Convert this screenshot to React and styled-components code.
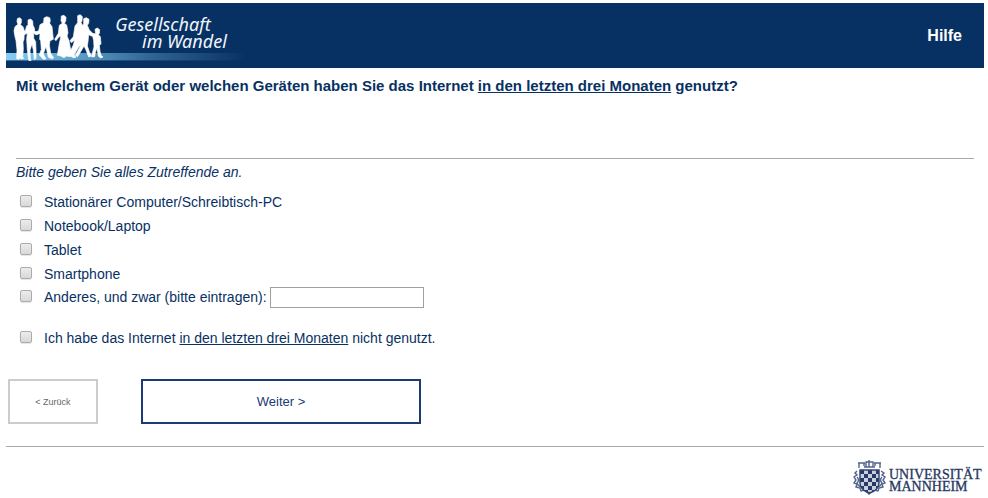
import React from "react";
import styled, { createGlobalStyle } from "styled-components";

const navy = "#083163";

const GlobalStyle = createGlobalStyle`
  * { box-sizing: border-box; }
  body {
    margin: 3px 4px 0 6px;
    background: #fff;
    color: ${navy};
    font: 14px/16px "Liberation Sans", Arial, sans-serif;
  }
`;

const Header = styled.header`
  display: flex;
  align-items: center;
  justify-content: space-between;
  height: 65px;
  padding-right: 22px;
  background: ${navy};
`;

const BrandLogo = styled.svg`
  display: block;
  width: 240px;
  height: 65px;
`;

const HelpLink = styled.a`
  color: #fff;
  font-size: 16px;
  font-weight: bold;
  text-decoration: none;
`;

const Survey = styled.main`
  padding: 10px 10px 0;
`;

const Question = styled.h1`
  min-height: 80px;
  margin: 0;
  font-size: 15px;
  line-height: 16px;
`;

const Options = styled.fieldset`
  margin: 0;
  padding: 0;
  border: 0;
  border-top: 1px solid #aaa;
`;

const Hint = styled.p`
  margin: 5px 0 10px;
  font-style: italic;
  line-height: 16px;
`;

const Option = styled.div`
  display: flex;
  align-items: center;
  height: ${(p) => (p.$withInput ? "22px" : "24px")};
  margin-top: ${(p) => (p.$separate ? "18px" : "0")};
`;

const Checkbox = styled.input`
  appearance: none;
  width: 12px;
  height: 12px;
  margin: 0 12px 2px 4px;
  border: 1px solid #acacac;
  border-radius: 2px;
  background: linear-gradient(#ececec, #d9d9d9);
  box-shadow: 0 1px 1px #e4e4e4;

  &:checked {
    background: ${navy};
    box-shadow: inset 0 0 0 2px #e6e6e6;
  }
`;

const OtherText = styled.input`
  width: 154px;
  height: 21px;
  margin-left: 3px;
  padding: 1px 4px;
  border: 1px solid #a0a0a0;
  color: inherit;
  font: inherit;
`;

const Navigation = styled.nav`
  display: flex;
  gap: 43px;
  margin: 29px 0 22px 2px;
`;

const NavButton = styled.button`
  width: ${(p) => (p.$primary ? "280px" : "90px")};
  height: 45px;
  padding: 0;
  border: 2px solid ${(p) => (p.$primary ? "#1b3a78" : "#ccc")};
  background: #fff;
  color: ${(p) => (p.$primary ? "#1b3a78" : "#666")};
  font-family: inherit;
  font-size: ${(p) => (p.$primary ? "13px" : "9px")};
  cursor: pointer;
`;

const Footer = styled.footer`
  display: flex;
  justify-content: flex-end;
  border-top: 1px solid #aaa;
  padding-top: 12px;
`;

const UniversityLogo = styled.svg`
  display: block;
  width: 132px;
  height: 38px;
`;

function SocietyLogo() {
  return (
    <BrandLogo viewBox="18 9 720 195" role="img" aria-label="Gesellschaft im Wandel">
      <defs>
        <linearGradient id="band" x1="0" x2="1" y1="0" y2="0">
          <stop offset="0" stopColor="#87cdf0" />
          <stop offset="0.3" stopColor="#5c9fc8" />
          <stop offset="0.6" stopColor="#306594" />
          <stop offset="1" stopColor={navy} />
        </linearGradient>
      </defs>
      <rect x="18" y="159" width="720" height="21" fill="url(#band)" />
      <rect x="18" y="180" width="720" height="3" fill="url(#band)" opacity="0.4" />
      <g fill="#fff" stroke="#fff" strokeWidth="2" strokeLinejoin="round">
        <path d="M52 56L58 53L64 57L64 68L61 74L69 80L73 92L72 118L69 126L70 148L68 170L71 175L64 177L59 173L57 178L50 176L51 150L48 122L44 106L42 92L45 80L54 73L51 65Z" />
        <path d="M84 60L92 57L98 63L99 76L103 84L104 94L112 96L118 93L119 99L108 104L101 100L101 115L107 125L108 150L108 175L103 179L100 150L96 132L90 150L91 175L93 182L86 181L82 150L80 118L82 100L72 104L66 98L76 92L80 78L84 74Z" />
        <path d="M132 54L140 50L149 53L151 61L149 70L156 80L160 118L150 122L148 135L152 160L161 173L157 177L145 172L138 140L134 150L130 162L138 177L130 178L118 165L124 148L122 122L119 118L120 100L110 104L106 97L116 92L120 74L131 68Z" />
        <path d="M184 48L192 46L198 52L197 64L193 70L200 75L204 98L201 108L207 122L213 155L210 170L200 168L192 173L182 168L172 166L178 130L183 108L176 112L168 122L164 118L175 100L178 76L187 70L183 62Z" />
        <path d="M233 47L241 44L247 50L246 62L243 68L250 80L252 110L246 130L236 142L228 155L222 164L228 172L220 173L206 166L208 160L220 135L224 120L214 128L210 122L220 110L225 78L233 68Z" />
        <path d="M251 56L259 53L267 58L266 70L262 76L268 90L278 100L290 103L288 109L274 108L266 104L264 125L262 138L268 155L274 168L266 171L258 150L252 138L242 155L233 170L226 166L240 140L245 120L244 80L251 72Z" />
        <path d="M285 88L292 84L299 89L298 101L295 104L301 110L303 132L298 136L300 154L303 166L309 171L301 174L295 168L291 144L286 158L284 170L275 171L276 164L282 140L281 122L278 108L287 102Z" />
      </g>
      <g fill="#f0f5fb" fontFamily='"Noto Sans", "Open Sans", sans-serif' fontStyle="italic" fontSize="54">
        <text x="346" y="92">Gesellschaft</text>
        <text x="426" y="143">im Wandel</text>
      </g>
    </BrandLogo>
  );
}

function MannheimLogo() {
  return (
    <UniversityLogo viewBox="0 0 132 38" role="img" aria-label="Universität Mannheim">
      <defs>
        <clipPath id="shield">
          <path d="M8 11h19v13q0 7-9.500 10Q8 31 8 24z" />
        </clipPath>
      </defs>
      <g fill="none" stroke="#53638e" strokeWidth="1.400">
        <path d="M7 9V4h5v3M28 9V4h-5v3M6 4h7M22 4h7M12 8h11M14 8V3h7v5M17 1v7" />
        <path d="M5 12l-2 2 2 2-3 2 2 3-2 3 3 1-1 3 4 1 1 3 4-1 4 4 5-4 4 1 1-3 4-1-1-3 3-1-2-3 2-3-3-2 2-2-3-2" />
        <path d="M5 18q3 3 0 6q1 3 4 4M30 18q-3 3 0 6q-1 3-4 4" />
      </g>
      <g clipPath="url(#shield)">
        <rect x="8" y="11" width="19" height="24" fill="#273766" />
        <path fill="#c9cfdd" d="M12 11h4v4h-4zM20 11h4v4h-4zM8 15h4v4H8zM16 15h4v4h-4zM24 15h4v4h-4zM12 19h4v4h-4zM20 19h4v4h-4zM8 23h4v4H8zM16 23h4v4h-4zM24 23h4v4h-4zM12 27h4v4h-4zM20 27h4v4h-4zM16 31h4v4h-4z" />
      </g>
      <path d="M8 11h19v13q0 7-9.500 10Q8 31 8 24z" fill="none" stroke="#34446f" strokeWidth="1.500" />
      <g fill="#27375f" stroke="#27375f" strokeWidth="0.300" fontFamily='"Liberation Serif", "Times New Roman", serif' fontSize="14">
        <text x="37" y="20">UNIVERSITÄT</text>
        <text x="37" y="32">MANNHEIM</text>
      </g>
    </UniversityLogo>
  );
}

const devices = [
  ["desktop", "Stationärer Computer/Schreibtisch-PC"],
  ["notebook", "Notebook/Laptop"],
  ["tablet", "Tablet"],
  ["smartphone", "Smartphone"],
];

export default function App() {
  return (
    <>
      <GlobalStyle />
      <Header>
        <SocietyLogo />
        <HelpLink href="#hilfe">Hilfe</HelpLink>
      </Header>
      <Survey>
        <Question id="question">
          Mit welchem Gerät oder welchen Geräten haben Sie das Internet <u>in den letzten drei Monaten</u> genutzt?
        </Question>
        <Options aria-labelledby="question">
          <Hint>Bitte geben Sie alles Zutreffende an.</Hint>
          {devices.map(([id, label]) => (
            <Option key={id}>
              <Checkbox type="checkbox" id={id} />
              <label htmlFor={id}>{label}</label>
            </Option>
          ))}
          <Option $withInput>
            <Checkbox type="checkbox" id="other" />
            <label htmlFor="other">Anderes, und zwar (bitte eintragen):</label>
            <OtherText type="text" aria-label="Anderes Gerät" />
          </Option>
          <Option $separate>
            <Checkbox type="checkbox" id="none" />
            <label htmlFor="none">
              Ich habe das Internet <u>in den letzten drei Monaten</u> nicht genutzt.
            </label>
          </Option>
        </Options>
      </Survey>
      <Navigation aria-label="Fragebogen">
        <NavButton type="button">&lt; Zurück</NavButton>
        <NavButton type="button" $primary>Weiter &gt;</NavButton>
      </Navigation>
      <Footer>
        <MannheimLogo />
      </Footer>
    </>
  );
}
